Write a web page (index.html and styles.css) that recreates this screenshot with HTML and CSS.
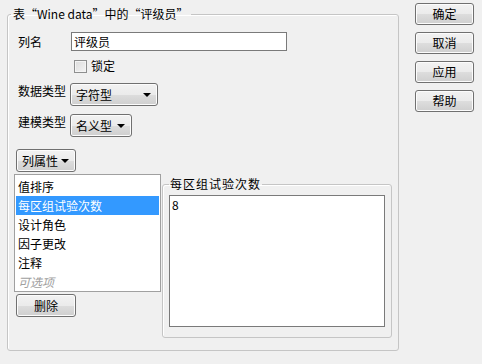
FILE: index.html
```html
<!DOCTYPE html>
<html lang="zh-CN">
<head>
    <meta charset="UTF-8">
    <title>列信息</title>
    <link rel="stylesheet" href="styles.css">
</head>
<body>

    <fieldset class="group">
        <legend>表“Wine data”中的“评级员”</legend>

        <div class="row name-row">
            <span class="label">列名</span>
            <div class="text-input">评级员</div>
        </div>

        <div class="row lock-row">
            <span class="checkbox"></span>
            <span>锁定</span>
        </div>

        <div class="row type-row">
            <span class="label">数据类型</span>
            <div class="combo combo-wide">字符型<span class="arrow"></span></div>
        </div>

        <div class="row type-row">
            <span class="label">建模类型</span>
            <div class="combo combo-small">名义型<span class="arrow"></span></div>
        </div>

        <div class="props">
            <div class="props-left">
                <div class="btn btn-menu">列属性<span class="arrow"></span></div>
                <ul class="prop-list">
                    <li>值排序</li>
                    <li class="selected">每区组试验次数</li>
                    <li>设计角色</li>
                    <li>因子更改</li>
                    <li>注释</li>
                    <li class="optional">可选项</li>
                </ul>
                <div class="btn btn-small">删除</div>
            </div>

            <fieldset class="group inner">
                <legend>每区组试验次数</legend>
                <div class="value-box">8</div>
            </fieldset>
        </div>
    </fieldset>

    <div class="actions">
        <div class="btn">确定</div>
        <div class="btn">取消</div>
        <div class="btn">应用</div>
        <div class="btn">帮助</div>
    </div>

</body>
</html>
```

FILE: styles.css
```css
/* Dialog base */
html, body {
    margin: 0;
    padding: 0;
}

body {
    width: 482px;
    height: 364px;
    background-color: #f0f0f0;
    font-family: "Noto Sans CJK SC", "Noto Sans", sans-serif;
    font-size: 12px;
    line-height: 16px;
    color: #000;
    display: flex;
    align-items: flex-start;
    overflow: hidden;
}

/* Group boxes */
.group {
    margin: 6px 0 0 7px;
    padding: 0 6px 0 6px;
    width: 392px;
    height: 345px;
    box-sizing: border-box;
    border: 1px solid #c5c5c5;
    border-radius: 3px;
    box-shadow: inset 1px 1px 0 #fff;
}

.group legend {
    margin-left: -3px;
    padding: 0 2px;
    line-height: 16px;
}

/* Form rows */
.row {
    display: flex;
    align-items: flex-start;
}

.label {
    margin-left: 4px;
    width: 53px;
}

.name-row {
    margin-top: 10px;
    height: 19px;
    align-items: center;
}

.text-input {
    width: 216px;
    height: 19px;
    box-sizing: border-box;
    border: 1px solid #7a7a7a;
    background-color: #fff;
    padding-left: 2px;
    line-height: 17px;
}

.lock-row {
    margin-top: 7px;
    margin-left: 60px;
    align-items: center;
}

.checkbox {
    width: 13px;
    height: 13px;
    box-sizing: border-box;
    border: 1px solid #8e8f8f;
    background: linear-gradient(135deg, #dcdcdc, #f4f4f4);
    box-shadow: inset 0 0 0 1px #f4f4f4;
    margin-right: 4px;
}

.type-row {
    margin-top: 9px;
}

.type-row .label {
    width: 52px;
    margin-top: 0;
}

.type-row + .type-row {
    margin-top: 8px;
}

/* Buttons and combos */
.btn,
.combo {
    box-sizing: border-box;
    border: 1px solid #707070;
    border-radius: 3px;
    background: linear-gradient(#f2f2f2 0%, #ebebeb 50%, #dddddd 51%, #cfcfcf 100%);
    box-shadow: inset 0 0 0 1px #fcfcfc;
}

.combo {
    height: 23px;
    padding-left: 5px;
    line-height: 21px;
    display: flex;
    justify-content: space-between;
    align-items: center;
    padding-right: 6px;
}

.combo-wide {
    width: 88px;
}

.combo-small {
    width: 62px;
}

.arrow {
    width: 0;
    height: 0;
    border-left: 4px solid transparent;
    border-right: 4px solid transparent;
    border-top: 4px solid #000;
}

.btn {
    height: 22px;
    line-height: 20px;
    text-align: center;
}

/* Lower area: properties */
.props {
    display: flex;
    align-items: flex-start;
    margin-top: 12px;
}

.props-left {
    width: 147px;
}

.btn-menu {
    width: 60px;
    height: 23px;
    margin-left: 2px;
    display: flex;
    align-items: center;
    justify-content: space-between;
    padding: 0 6px 0 5px;
}

.btn-small {
    width: 60px;
    height: 23px;
    margin-left: 2px;
    line-height: 21px;
}

.prop-list {
    list-style: none;
    margin: 2px 0 2px 0;
    padding: 1px;
    height: 118px;
    box-sizing: border-box;
    border: 1px solid #a0a0a0;
    background-color: #fff;
}

.prop-list li {
    height: 19px;
    line-height: 19px;
    padding-left: 2px;
}

.prop-list li:first-child {
    margin-top: 1px;
}

.prop-list li.selected {
    background-color: #3399ff;
    color: #fff;
}

.prop-list li.optional {
    color: #a0a0a0;
    font-style: italic;
}

.group.inner {
    margin: 27px 0 0 1px;
    width: 230px;
    height: auto;
    padding: 0 6px 10px 6px;
}

.group.inner legend {
    margin-left: 0;
    padding: 0 1px;
    letter-spacing: 1px;
}

.value-box {
    margin-top: 3px;
    height: 132px;
    box-sizing: border-box;
    border: 1px solid #7a7a7a;
    background-color: #fff;
    padding-left: 2px;
    line-height: 18px;
}

/* Dialog actions */
.actions {
    margin: 3px 0 0 16px;
    width: 59px;
    display: flex;
    flex-direction: column;
    gap: 7px;
}
```
